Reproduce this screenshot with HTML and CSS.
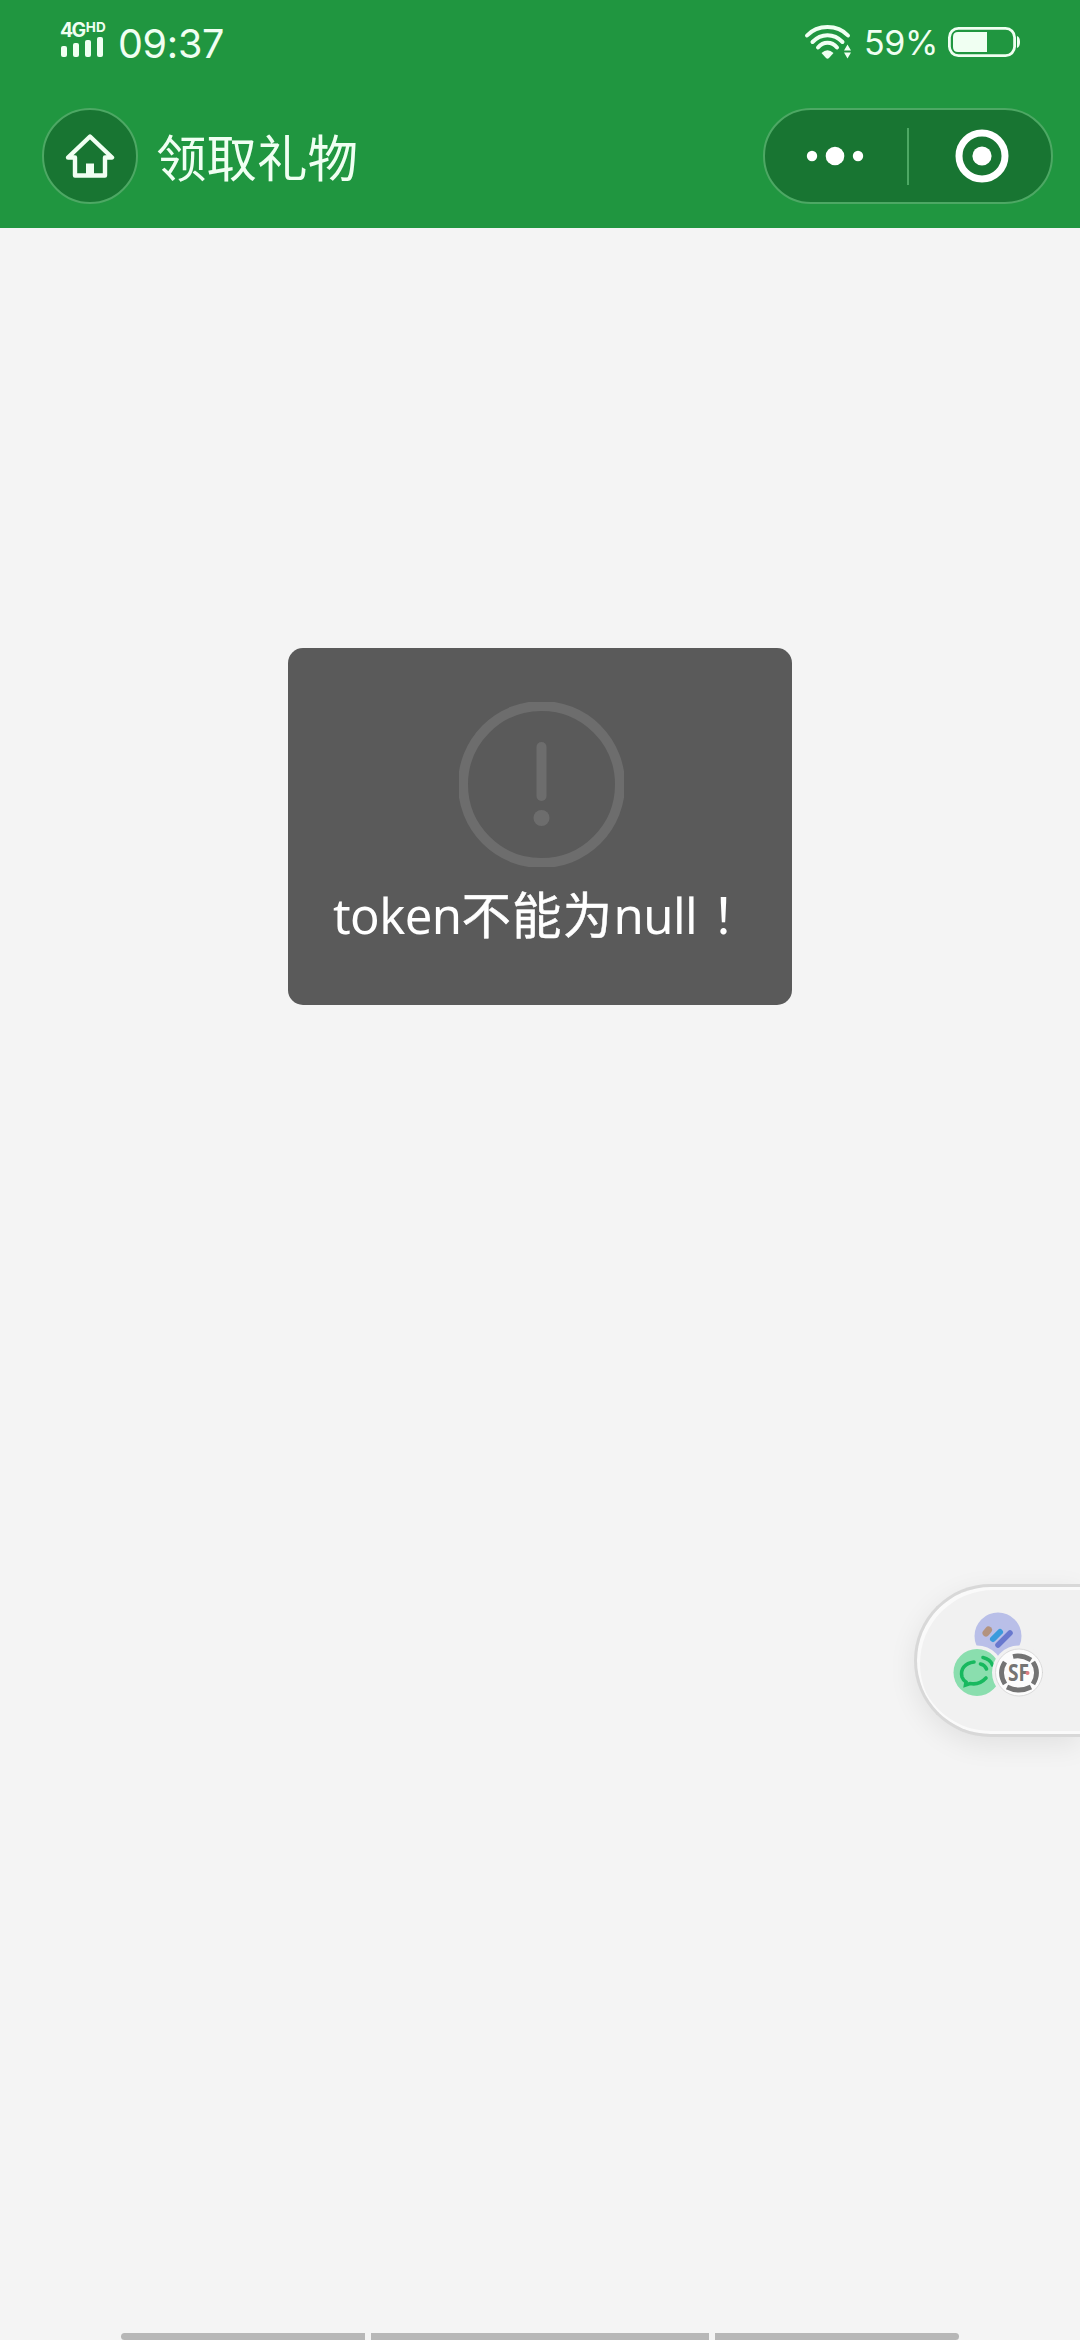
FILE: index.html
```html
<!DOCTYPE html>
<html lang="zh-CN">
<head>
<meta charset="utf-8">
<title>领取礼物</title>
<link rel="stylesheet" href="styles.css">
</head>
<body>
<div class="screen">
  <header class="header">
    <div class="status">
      <div class="signal">
        <div class="network">4G<span class="hd">HD</span></div>
        <svg class="bars" width="44" height="21" viewBox="0 0 44 21" fill="#f0fff2">
          <rect x="1" y="10" width="6" height="11" rx="2"/><rect x="13" y="7" width="6" height="14" rx="2"/><rect x="25" y="4" width="6" height="17" rx="2"/><rect x="37" y="1" width="6" height="20" rx="2"/>
        </svg>
      </div>
      <div class="clock">09:37</div>
      <svg class="wifi" width="48" height="36" viewBox="0 0 48 36" fill="none" stroke="#f0fff2" stroke-width="4" stroke-linecap="round">
        <path d="M3 11.500Q11 3 23.500 3T44 11.500M8.500 18Q15 11.300 23.500 11.300T38.500 18M14 23.500Q18 18.800 23.500 18.800T33 23.500"/>
        <path d="M17.500 29Q23.500 23.500 29.500 29L25 34Q23.500 35.500 22 34Z" fill="#f0fff2" stroke="none"/>
        <path d="M43.500 20.500L47 26.500H40ZM43.500 34.500L47 28.500H40Z" fill="#f0fff2" stroke="none"/>
      </svg>
      <div class="percent">59%</div>
      <svg class="battery" width="72" height="30" viewBox="0 0 72 30">
        <rect x="1.400" y="1.400" width="65.200" height="27.200" rx="9" fill="none" stroke="#f0fff2" stroke-width="2.800"/>
        <path d="M39 5V25H10Q5 25 5 20V10Q5 5 10 5ZM69 9Q72 10 72 15T69 21Z" fill="#f0fff2"/>
      </svg>
    </div>
    <nav class="nav">
      <div class="home">
        <svg width="50" height="46" viewBox="0 0 50 46" fill="none" stroke="#f0fff2" stroke-width="4.400" stroke-linejoin="round" stroke-linecap="round">
          <path d="M10 24.500H3L25 3.500L47 24.500H40V42.500H10Z"/><path d="M21 30.500H29V42H21Z" fill="#f0fff2" stroke="none"/>
        </svg>
      </div>
      <h1 class="title">领取礼物</h1>
      <div class="capsule">
        <svg class="more" width="58" height="20" viewBox="0 0 58 20" fill="#fff"><circle cx="6" cy="10" r="5.200"/><circle cx="29" cy="10" r="9.300"/><circle cx="52" cy="10" r="5.200"/></svg>
        <div class="divider"></div>
        <svg class="close" width="54" height="54" viewBox="0 0 54 54"><circle cx="27" cy="27" r="23" fill="none" stroke="#fff" stroke-width="7"/><circle cx="27" cy="27" r="9.600" fill="#fff"/></svg>
      </div>
    </nav>
  </header>
  <main class="content">
    <div class="toast">
      <svg class="alert" width="165" height="165" viewBox="0 0 165 165" fill="none" stroke="#6d6d6d">
        <circle cx="82.500" cy="82.500" r="78.500" stroke-width="10"/><path d="M82.500 45V94" stroke-width="10" stroke-linecap="round"/><circle cx="82.500" cy="116" r="8" fill="#6d6d6d" stroke="none"/>
      </svg>
      <p class="message">token<span class="han">不能为</span>null<span class="mark" lang="zh-TW">！</span></p>
    </div>
  </main>
  <aside class="float">
    <svg width="92" height="86" viewBox="0 0 92 86" fill="none" stroke-linecap="round">
      <circle cx="46" cy="25" r="23.500" fill="#b9bfe8"/>
      <path d="M34 22L36.500 19" stroke="#b3937f" stroke-width="7"/><path d="M41 28L48 21" stroke="#3b9bdc" stroke-width="6"/><path d="M46 34L58 22" stroke="#6878ce" stroke-width="5.500"/>
      <circle cx="25" cy="61.500" r="27" fill="#f1f1f1"/><circle cx="25" cy="61.500" r="23.500" fill="#8adeae"/>
      <path d="M22 51C13 52 8 58 10 66Q11 69 14 71L13.500 74L18 72.500Q27 74.500 34 67" stroke="#18b95f" stroke-width="3.600"/>
      <path d="M28.500 53Q33 54 34.500 58M31 46.500Q38 48 40.500 54" stroke="#18b95f" stroke-width="3.600"/>
      <circle cx="67" cy="61.500" r="27" fill="#f1f1f1"/><circle cx="67" cy="61.500" r="23.500" fill="#fcfcfc" stroke="#d3d3d3" stroke-width=".8"/>
      <g stroke="#747474" stroke-width="4.800" stroke-linecap="butt"><path d="M61 45.500Q70 43.500 79 49M55 76Q67 82 79 76M53 51Q46 61.500 53 73M81 51Q88 61.500 81 73"/></g>
      <text class="sf" x="56" y="70" textLength="21" lengthAdjust="spacingAndGlyphs">SF</text><circle cx="75.500" cy="62" r="2" fill="#dc7b82"/>
    </svg>
  </aside>
  <footer class="gesture"><i></i><i></i><i></i></footer>
</div>
</body>
</html>
```
FILE: styles.css
```css
* { box-sizing: border-box; }
body { margin: 0; }
.screen { width: 1080px; height: 2340px; display: flex; flex-direction: column; background: #f4f4f4; position: relative; overflow: hidden; font-family: "Noto Sans", "Noto Sans CJK SC", sans-serif; }
.header { height: 228px; background: #209640; color: #f0fff2; }
.status { height: 84px; display: flex; align-items: flex-start; padding-left: 60px; }
.signal { width: 46px; padding-top: 20px; display: flex; flex-direction: column; }
.network { height: 16px; font: 700 19.500px/20px Inter, sans-serif; letter-spacing: -1.6px; white-space: nowrap; }
.hd { margin-left: 1px; font-size: 13.500px; letter-spacing: .3px; vertical-align: 5px; line-height: 1px; }
.bars { display: block; }
.clock { width: 686px; padding-left: 12px; margin-top: 20px; font: 400 39.500px/48px Inter, sans-serif; letter-spacing: -.3px; }
.wifi { margin: 24px 0 0 12px; }
.percent { width: 84px; margin-top: 23px; padding-left: 12px; font: 400 34px/40px Inter, sans-serif; letter-spacing: -.4px; white-space: nowrap; }
.battery { margin: 27px 0 0 12px; }
.nav { height: 144px; display: flex; align-items: center; padding: 0 27px 0 42px; }
.home { width: 96px; height: 96px; border: 2px solid #4da864; border-radius: 50%; background: #187532; display: flex; align-items: center; justify-content: center; }
.title { margin: 0 0 2px 18px; font: 400 50.500px/72px "Noto Sans CJK SC", sans-serif; }
.capsule { width: 290px; height: 96px; margin-left: auto; border: 2px solid #4da864; border-radius: 48px; background: #187532; display: flex; align-items: center; }
.more { margin-left: 41px; }
.divider { width: 2px; height: 57px; background: #4da864; margin-left: 43px; }
.close { margin-left: 46px; }
.content { flex: 1; display: flex; justify-content: center; align-items: flex-start; padding-top: 420px; }
.toast { width: 504px; height: 357px; border-radius: 15px; background: #5a5a5a; padding-top: 54px; display: flex; flex-direction: column; align-items: center; }
.alert { display: block; margin-left: 2px; }
.message { width: 414px; height: 72px; margin: 12px 0 0; color: #fff; font-size: 49px; line-height: 72px; letter-spacing: -.6px; white-space: nowrap; }
.han { font: 400 49.500px/1px "Noto Sans CJK SC", sans-serif; letter-spacing: 1.2px; -webkit-text-stroke: .5px #fff; }
.mark { font: 400 49px/1px "Noto Sans CJK TC", sans-serif; margin-left: 2px; }
.float { position: absolute; right: 0; top: 1584px; width: 166px; height: 153px; border: 3px solid #d8d8d8; border-right: 0; border-radius: 77px 0 0 77px; background: #f1f1f1; box-shadow: inset 3px 3px 0 #fafafa, inset 0 -3px 0 #fafafa, 0 8px 28px rgba(0,0,0,.08); padding: 24px 0 0 35px; }
.sf { font: 700 23px "Open Sans", sans-serif; fill: #747474; }
.gesture { height: 7px; display: grid; grid-template-columns: 244px 338px 244px; gap: 6px; padding-left: 121px; }
.gesture i { background: #b7b7b7; }
.gesture i:first-child { border-radius: 4px 0 0 4px; }
.gesture i:last-child { border-radius: 0 4px 4px 0; }
```
